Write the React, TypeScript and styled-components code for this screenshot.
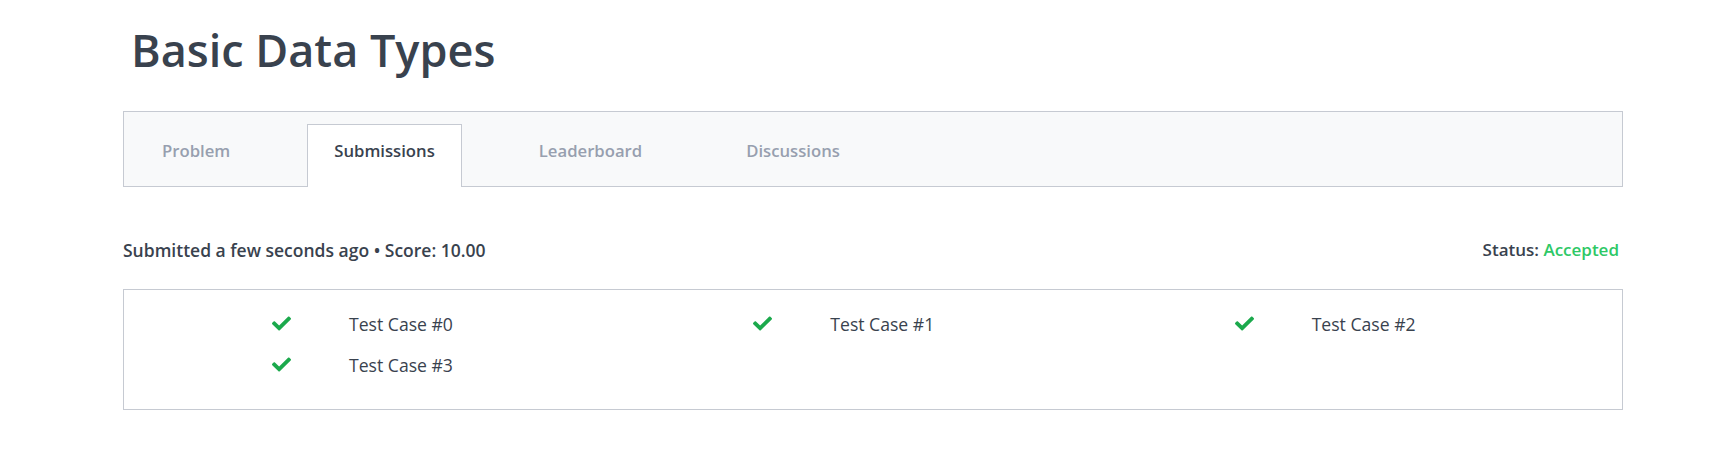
import React from "react";
import styled, { createGlobalStyle } from "styled-components";
import { FaCheck } from "react-icons/fa";

const GlobalStyle = createGlobalStyle`
  html, body {
    margin: 0;
    padding: 0;
    background: #ffffff;
  }
  body {
    font-family: "Open Sans", "Noto Sans", "Liberation Sans", sans-serif;
    color: #39424e;
  }
`;

const Page = styled.div`
  width: 1500px;
  padding-left: 123px;
`;

const Title = styled.h1`
  margin: 22px 0 34px 8px;
  font-size: 45px;
  line-height: 55px;
  font-weight: 600;
  color: #39424e;
`;

const TabBar = styled.nav`
  box-sizing: border-box;
  height: 76px;
  display: flex;
  align-items: flex-end;
  gap: 50px;
  padding: 12px 12px 0 11px;
  border: 1px solid #c6cad2;
  background: #f8f9fa;
`;

const Tab = styled.div<{ $active?: boolean }>`
  box-sizing: border-box;
  height: 63px;
  margin-bottom: -1px;
  padding: 14px 26px 0;
  border: 1px solid ${(p) => (p.$active ? "#c6cad2" : "transparent")};
  border-bottom: none;
  background: ${(p) => (p.$active ? "#ffffff" : "transparent")};
  font-size: 16.7px;
  line-height: 24px;
  font-weight: 600;
  color: ${(p) => (p.$active ? "#39424e" : "#979faf")};
  white-space: nowrap;
`;

const SubmissionHeader = styled.div`
  display: flex;
  justify-content: space-between;
  align-items: center;
  margin: 51px 4px 27px 0;
  line-height: 24px;
  color: #39424e;
`;

const Summary = styled.span`
  font-size: 17.5px;
  font-weight: 600;
`;

const Status = styled.span`
  font-size: 17px;
  font-weight: 600;
`;

const Accepted = styled.span`
  color: #2ec866;
`;

const ResultBox = styled.div`
  border: 1px solid #c6cad2;
  padding: 13px 27px 24px;
  display: grid;
  grid-template-columns: repeat(3, 1fr);
  grid-auto-rows: 41px;
`;

const Case = styled.div`
  display: flex;
  align-items: center;
  gap: 58px;
  padding-left: 121px;
  font-size: 17.6px;
  line-height: 24px;
  font-weight: 400;
  color: #39424e;
`;

const CheckIcon = styled(FaCheck)`
  flex: none;
  width: 19px;
  height: 19px;
  color: #1ba94c;
`;

const tabs = ["Problem", "Submissions", "Leaderboard", "Discussions"];
const cases = [0, 1, 2, 3];

export default function App() {
  return (
    <>
      <GlobalStyle />
      <Page>
        <Title>Basic Data Types</Title>
        <TabBar>
          {tabs.map((t) => (
            <Tab key={t} $active={t === "Submissions"}>
              {t}
            </Tab>
          ))}
        </TabBar>
        <SubmissionHeader>
          <Summary>Submitted a few seconds ago • Score: 10.00</Summary>
          <Status>
            Status: <Accepted>Accepted</Accepted>
          </Status>
        </SubmissionHeader>
        <ResultBox>
          {cases.map((c) => (
            <Case key={c}>
              <CheckIcon />
              <span>Test Case #{c}</span>
            </Case>
          ))}
        </ResultBox>
      </Page>
    </>
  );
}
